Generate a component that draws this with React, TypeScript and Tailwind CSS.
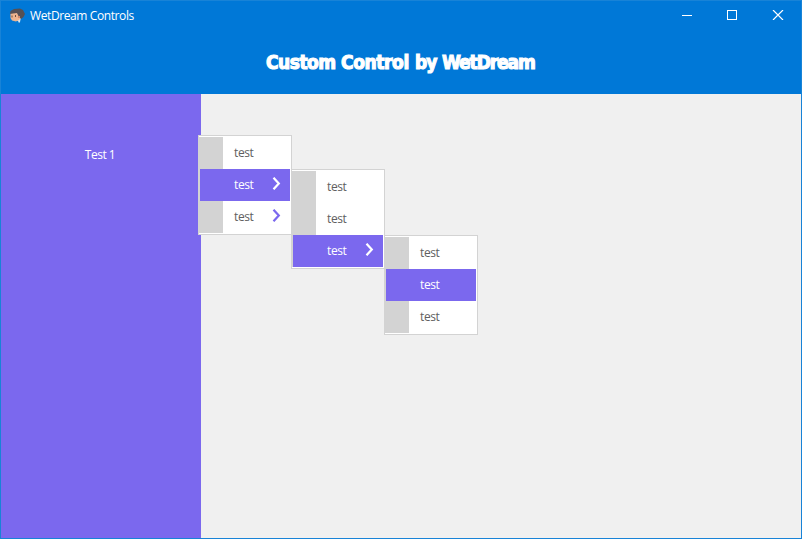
import React from 'react';

type Item = { label: string; active?: boolean; arrow?: boolean };

function Chevron({ color }: { color: string }) {
  return (
    <svg width="9" height="13" viewBox="0 0 9 13" className="ml-auto mr-[9px] -mt-[3px]" fill="none" stroke={color} strokeWidth="2.2">
      <path d="M1.5 0.7 L6.8 6.5 L1.5 12.3" />
    </svg>
  );
}

function DropMenu({ items, place }: { items: Item[]; place: string }) {
  return (
    <ul className={`absolute h-[100px] w-[94px] border border-[#d3d3d3] bg-white py-px ${place}`}>
      {items.map((item, i) => (
        <li key={i} className="flex h-8 bg-[linear-gradient(to_right,#d3d3d3_24px,white_24px)] px-px">
          <div
            className={`flex w-full items-center pl-[34px] text-[12px] tracking-[-0.4px] ${
              item.active ? 'bg-[#7b68ee] text-white' : 'text-[#606060]'
            }`}
          >
            <span>{item.label}</span>
            {item.arrow && <Chevron color={item.active ? '#ffffff' : '#7b68ee'} />}
          </div>
        </li>
      ))}
    </ul>
  );
}

function Avatar() {
  return (
    <svg width="16" height="16" viewBox="0 0 16 16" className="ml-2">
      <path d="M5 12 L12 9 L11 14 L10 15 L9 13 Z" fill="#d9e6ef" />
      <path d="M1.5 5 L7 4 L11 7 L12 10 L10 12 L7 13.5 L3 12.5 L1.5 10 Z" fill="#edb48f" />
      <path d="M1 6 L1.5 3 L5 1 L11 0.5 L14 2 L16 6 L14.5 9 L12 11 L9.5 8 L8 5 L4 5.5 Z" fill="#555054" />
      <path d="M9 8 h2 v2 h-2z" fill="#d28c6d" />
      <path d="M2.5 7.5h1v2h-1z M6 7h1v2H6z" fill="#73513f" />
    </svg>
  );
}

export default function App() {
  return (
    <div className="relative flex h-[539px] w-[802px] flex-col overflow-hidden border border-[#1883d7] bg-[#f0f0f0] font-['Open_Sans','Noto_Sans',sans-serif]">
      <header className="h-[93px] shrink-0 bg-[#0078d7] text-white">
        <div className="flex h-[30px] items-center">
          <Avatar />
          <span className="ml-[5px] text-[12px] tracking-[-0.4px]">WetDream Controls</span>
          <svg width="103" height="10" viewBox="0 0 103 10" className="-mt-[2px] ml-auto mr-[16px]" fill="none" stroke="white">
            <path d="M0 5.5 H10" />
            <rect x="45.5" y="0.5" width="9" height="9" />
            <path d="M91 0 L101 10 M101 0 L91 10" strokeWidth="1.2" />
          </svg>
        </div>
        <h1 className="flex h-[62px] justify-center gap-[6px] whitespace-nowrap font-['DejaVu_Sans_Condensed','DejaVu_Sans',sans-serif] text-[19px] font-bold leading-[62px] [-webkit-text-stroke:1.1px_white]">
          <span className="w-[69px] tracking-[-0.5px]">Custom</span>
          <span className="w-[68px] tracking-[-0.4px]">Control</span>
          <span className="w-[21px] tracking-[-1px]">by</span>
          <span className="w-[94px] tracking-[-1.1px]">WetDream</span>
        </h1>
      </header>
      <main className="flex flex-1">
        <aside className="w-[200px] bg-[#7b68ee] pt-[52px] text-center text-[12px] leading-[18px] tracking-[-0.5px] text-white">
          <span className="-ml-[2px]">Test 1</span>
        </aside>
      </main>
      <DropMenu
        place="left-[197px] top-[134px]"
        items={[{ label: 'test' }, { label: 'test', active: true, arrow: true }, { label: 'test', arrow: true }]}
      />
      <DropMenu
        place="left-[290px] top-[168px]"
        items={[{ label: 'test' }, { label: 'test' }, { label: 'test', active: true, arrow: true }]}
      />
      <DropMenu
        place="left-[383px] top-[234px]"
        items={[{ label: 'test' }, { label: 'test', active: true }, { label: 'test' }]}
      />
    </div>
  );
}
